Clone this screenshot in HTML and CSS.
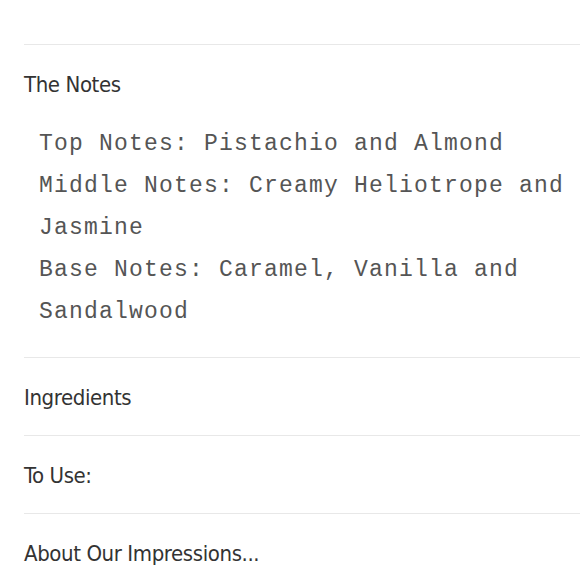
FILE: index.html
```html
<!DOCTYPE html>
<html>
<head>
<meta charset="utf-8">
<link rel="stylesheet" href="styles.css">
</head>
<body>
<div class="accordion">
  <section class="item">
    <h3 class="title">The Notes</h3>
    <pre class="notes">Top Notes: Pistachio and Almond
Middle Notes: Creamy Heliotrope and Jasmine
Base Notes: Caramel, Vanilla and Sandalwood</pre>
  </section>
  <section class="item">
    <h3 class="title">Ingredients</h3>
  </section>
  <section class="item">
    <h3 class="title">To Use:</h3>
  </section>
  <section class="item">
    <h3 class="title">About Our Impressions...</h3>
  </section>
</div>
</body>
</html>
```
FILE: styles.css
```css
html, body {
  margin: 0;
  padding: 0;
  background: #ffffff;
  overflow: hidden;
}
.accordion {
  margin: 44px 0 0 24px;
  width: 556px;
}
.item {
  border-top: 1px solid #e8e8e8;
  padding: 21px 0 19px;
}
.title {
  margin: 0;
  font-family: "DejaVu Sans Condensed", "Liberation Sans Narrow", sans-serif;
  font-weight: normal;
  font-size: 22px;
  letter-spacing: -0.4px;
  line-height: 37px;
  color: #333333;
}
.notes {
  margin: 20px 0 5px 15px;
  font-family: "Liberation Mono", monospace;
  font-size: 23px;
  letter-spacing: 1.2px;
  line-height: 42px;
  color: #555555;
  white-space: pre-wrap;
}
```
